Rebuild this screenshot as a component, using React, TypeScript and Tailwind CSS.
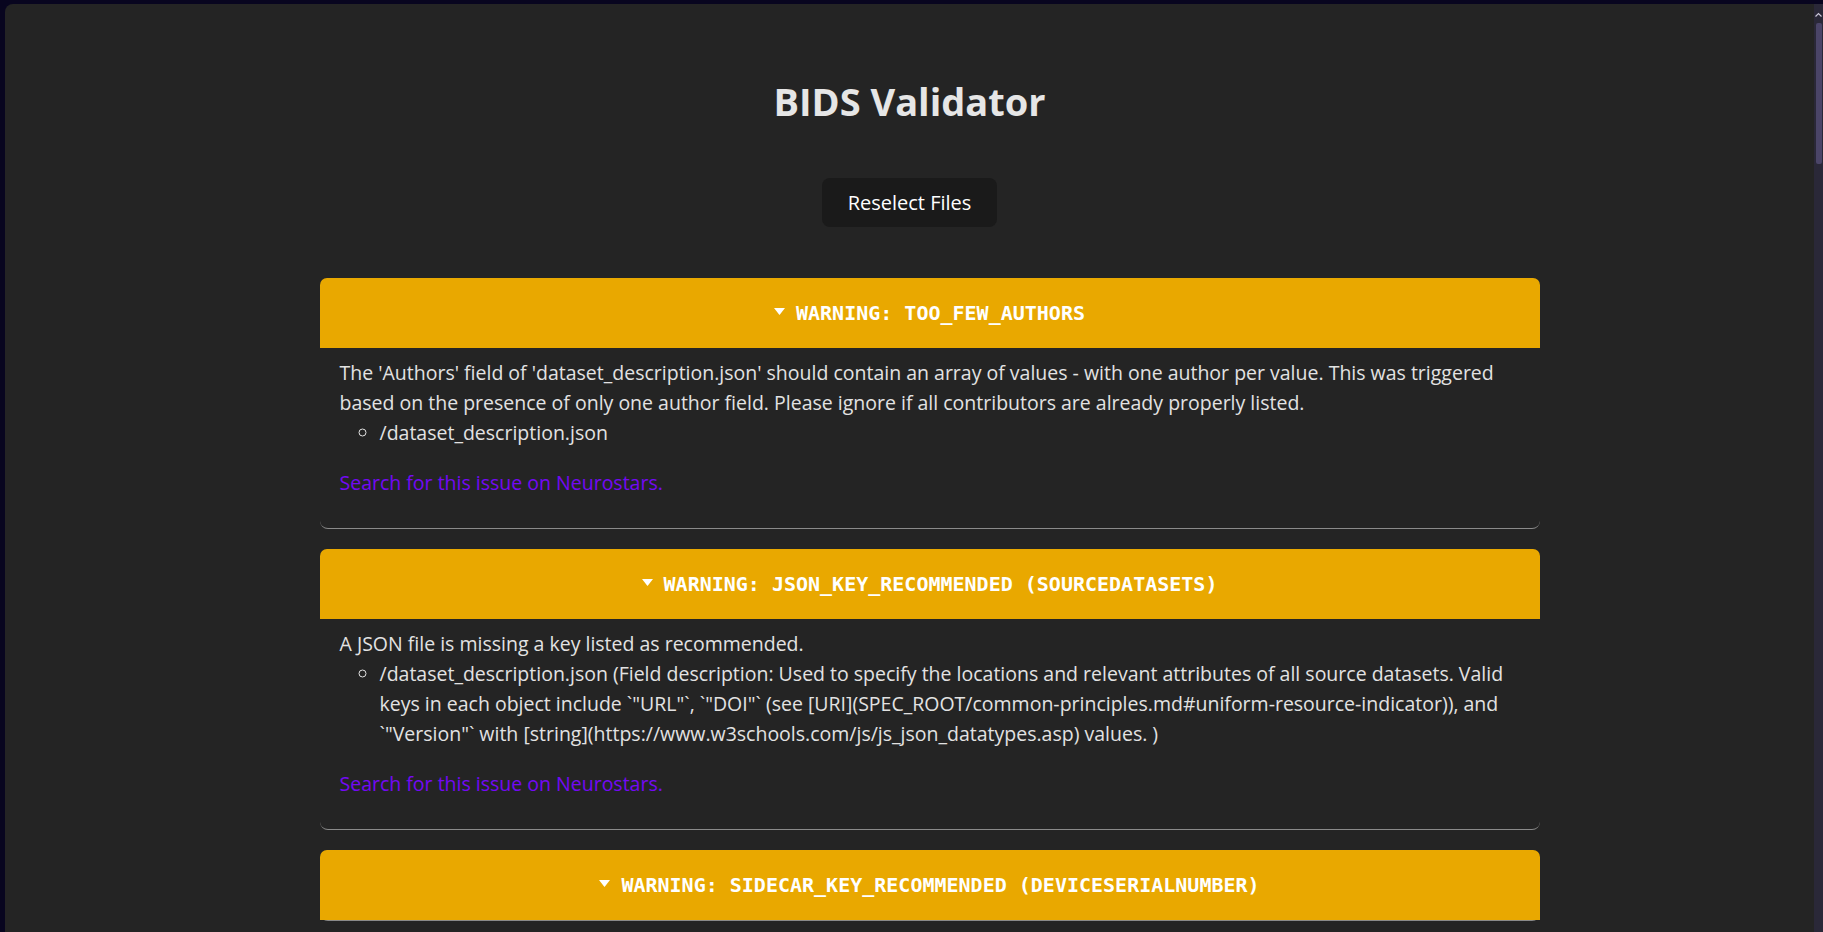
type Issue = {
  title: string;
  text?: string;
  files: string[];
};

const issues: Issue[] = [
  {
    title: "WARNING: TOO_FEW_AUTHORS",
    text: "The 'Authors' field of 'dataset_description.json' should contain an array of values - with one author per value. This was triggered based on the presence of only one author field. Please ignore if all contributors are already properly listed.",
    files: ["/dataset_description.json"],
  },
  {
    title: "WARNING: JSON_KEY_RECOMMENDED (SOURCEDATASETS)",
    text: "A JSON file is missing a key listed as recommended.",
    files: [
      '/dataset_description.json (Field description: Used to specify the locations and relevant attributes of all source datasets. Valid keys in each object include `"URL"`, `"DOI"` (see [URI](SPEC_ROOT/common-principles.md#uniform-resource-indicator)), and `"Version"` with [string](https://www.w3schools.com/js/js_json_datatypes.asp) values. )',
    ],
  },
  {
    // body of this one sits below the fold
    title: "WARNING: SIDECAR_KEY_RECOMMENDED (DEVICESERIALNUMBER)",
    files: [],
  },
];

function IssueCard({ issue }: { issue: Issue }) {
  return (
    <div className="rounded-lg border-b border-[#8a8a8a]">
      <div className="flex h-[70px] items-center justify-center gap-[11px] rounded-t-[7px] bg-[#e9a800] font-['DejaVu_Sans_Mono',monospace] text-[20px] font-bold text-white">
        <svg width="11" height="7" viewBox="0 0 11 7" className="-mt-[3px]">
          <path d="M0 0h11L5.5 7z" fill="#ffffff" />
        </svg>
        <span>{issue.title}</span>
      </div>
      {issue.text && (
        <div className="px-[20px] pt-[10px] pb-[30px] text-left">
          <p>{issue.text}</p>
          <ul className="list-[circle] pl-[40px]">
            {issue.files.map((f) => (
              <li key={f}>{f}</li>
            ))}
          </ul>
          <a href="#" className="mt-[20px] block text-[#7409f4]">
            Search for this issue on Neurostars.
          </a>
        </div>
      )}
    </div>
  );
}

export default function App() {
  return (
    <div className="flex h-screen w-full overflow-hidden bg-[#08051f] pt-[4px] pl-[5px]">
      <main className="flex-1 overflow-hidden rounded-tl-lg bg-[#242424] text-center font-['Open_Sans',sans-serif] text-[19.5px] leading-[30px] text-[#e2e2e2]">
        <h1 className="pt-[76px] text-[38px] font-bold leading-[42px] text-[#e6e6e6]">BIDS Validator</h1>
        <button
          type="button"
          className="mt-[56px] h-[49px] w-[175px] rounded-lg bg-[#1a1a1a] text-[20px] font-medium text-white"
        >
          Reselect Files
        </button>
        <div className="mx-auto mt-[51px] flex w-[1260px] flex-col gap-[20px] pl-[40px]">
          {issues.map((issue) => (
            <IssueCard key={issue.title} issue={issue} />
          ))}
        </div>
      </main>
      <div className="flex w-[9px] flex-col items-center bg-[#2a2838]">
        <svg width="7" height="5" viewBox="0 0 7 5" className="mt-[8px]">
          <path d="M0.5 4.5L3.5 1.5L6.5 4.5" stroke="#c9c6d6" strokeWidth="1.2" fill="none" />
        </svg>
        <div className="mt-[6px] h-[141px] w-[6px] rounded-[2px] bg-[#4b4568]" />
      </div>
    </div>
  );
}
